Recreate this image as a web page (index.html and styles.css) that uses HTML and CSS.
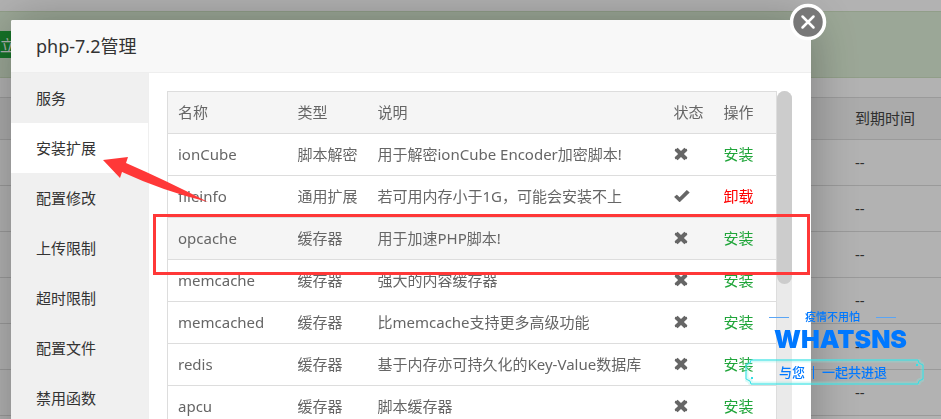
FILE: index.html
```html
<!DOCTYPE html>
<html lang="zh-CN">
<head>
    <meta charset="UTF-8">
    <meta name="viewport" content="width=device-width, initial-scale=1.0">
    <title>php-7.2管理</title>
    <link rel="stylesheet" href="styles.css">
</head>
<body>
    <svg class="symbols" aria-hidden="true">
        <symbol id="icon-remove" viewBox="0 0 14 14">
            <path d="M3.6 .8 7 4.1 10.4 .8 11.8 2.1 12.8 1.7 13.3 3.8 9.9 7 13.3 10.2 12.8 12.3 11.8 11.9 10.4 13.2 7 9.9 3.6 13.2 2.2 11.9 1.2 12.3 .7 10.2 4.1 7 .7 3.8 1.2 1.7 2.2 2.1z"/>
        </symbol>
        <symbol id="icon-ok" viewBox="0 0 16 14">
            <path d="M13.1 1.2 15.7 3.6 6.2 12.8Q5.6 13.2 5 12.7L.4 8.2Q.2 7.8.5 7.5L2.4 5.9Q2.8 5.7 3.2 6L5.6 8.2 12.5 1.3Q12.8 1 13.1 1.2z"/>
        </symbol>
    </svg>

    <!-- Site list -->
    <main class="page">
        <div class="notice"><button class="notice-btn">立</button></div>
        <table class="sites">
            <thead>
                <tr><th></th><th class="expire">到期时间</th></tr>
            </thead>
            <tbody>
                <tr><td></td><td>--</td></tr>
                <tr><td></td><td>--</td></tr>
                <tr><td></td><td>--</td></tr>
                <tr><td></td><td>--</td></tr>
                <tr><td></td><td>--</td></tr>
                <tr><td></td><td>--</td></tr>
            </tbody>
        </table>
    </main>

    <div class="shade"></div>

    <!-- PHP dialog -->
    <div class="dialog" role="dialog" aria-labelledby="dialog-title">
        <h1 class="dialog-title" id="dialog-title">php-7.2管理</h1>
        <button class="dialog-close" aria-label="关闭">
            <svg viewBox="0 0 38 38">
                <circle cx="19" cy="19" r="16.5" fill="#787878" stroke="#fff" stroke-width="3.5"/>
                <path d="M13.5 13.5 24.5 24.5M24.5 13.5 13.5 24.5" stroke="#fff" stroke-width="2.5" stroke-linecap="round"/>
            </svg>
        </button>
        <div class="dialog-body">
            <nav class="menu">
                <a href="#">服务</a>
                <a href="#" class="active">安装扩展</a>
                <a href="#">配置修改</a>
                <a href="#">上传限制</a>
                <a href="#">超时限制</a>
                <a href="#">配置文件</a>
                <a href="#">禁用函数</a>
            </nav>
            <div class="content">
                <table class="extensions">
                    <thead>
                        <tr>
                            <th class="col-name">名称</th>
                            <th class="col-type">类型</th>
                            <th>说明</th>
                            <th class="col-state">状态</th>
                            <th class="col-action">操作</th>
                        </tr>
                    </thead>
                    <tbody>
                        <tr>
                            <td>ionCube</td><td>脚本解密</td><td>用于解密ionCube Encoder加密脚本!</td>
                            <td><svg class="state"><use href="#icon-remove"/></svg></td>
                            <td><a href="#" class="install">安装</a></td>
                        </tr>
                        <tr>
                            <td>fileinfo</td><td>通用扩展</td><td>若可用内存小于1G，可能会安装不上</td>
                            <td><svg class="state state-ok"><use href="#icon-ok"/></svg></td>
                            <td><a href="#" class="uninstall">卸载</a></td>
                        </tr>
                        <tr class="current">
                            <td>opcache</td><td>缓存器</td><td>用于加速PHP脚本!</td>
                            <td><svg class="state"><use href="#icon-remove"/></svg></td>
                            <td><a href="#" class="install">安装</a></td>
                        </tr>
                        <tr>
                            <td>memcache</td><td>缓存器</td><td>强大的内容缓存器</td>
                            <td><svg class="state"><use href="#icon-remove"/></svg></td>
                            <td><a href="#" class="install">安装</a></td>
                        </tr>
                        <tr>
                            <td>memcached</td><td>缓存器</td><td>比memcache支持更多高级功能</td>
                            <td><svg class="state"><use href="#icon-remove"/></svg></td>
                            <td><a href="#" class="install">安装</a></td>
                        </tr>
                        <tr>
                            <td>redis</td><td>缓存器</td><td>基于内存亦可持久化的Key-Value数据库</td>
                            <td><svg class="state"><use href="#icon-remove"/></svg></td>
                            <td><a href="#" class="install">安装</a></td>
                        </tr>
                        <tr>
                            <td>apcu</td><td>缓存器</td><td>脚本缓存器</td>
                            <td><svg class="state"><use href="#icon-remove"/></svg></td>
                            <td><a href="#" class="install">安装</a></td>
                        </tr>
                    </tbody>
                </table>
                <div class="scrollbar"><div class="scrollbar-thumb"></div></div>
            </div>
        </div>

        <!-- Marks for the opcache step -->
        <div class="mark-box"></div>
        <svg class="mark-arrow" viewBox="0 0 106 48">
            <path d="M0 3 25 0 23 6 Q62 23 105 45 Q60 34 19 15 L17 21z" fill="#ff3838"/>
        </svg>
    </div>

    <!-- Watermark -->
    <div class="watermark">
        <div class="watermark-top"><span>疫情不用怕</span></div>
        <div class="watermark-name">WHATSNS</div>
        <div class="watermark-slogan">
            <svg class="watermark-frame" viewBox="0 0 179 26">
                <path d="M6 1H173L174 4 178 6V20L174 22 173 25H6L5 22 1 20V6L5 4z" fill="none" stroke="#7ff0e4" stroke-width="5" opacity=".3"/>
                <path d="M6 1H173L174 4 178 6V20L174 22 173 25H6L5 22 1 20V6L5 4z" fill="none" stroke="#33e0e6"/>
                <path d="M171 6h2M6 19h2" stroke="#33e0e6" stroke-width="2"/>
            </svg>
            <span>与您</span><span class="divider"></span><span>一起共进退</span>
        </div>
    </div>
</body>
</html>
```
FILE: styles.css
```css
* {
    box-sizing: border-box;
}

body {
    margin: 0;
    height: 100vh;
    overflow: hidden;
    background-color: #fff;
    color: #666;
    font-family: "Noto Sans", "Noto Sans CJK SC", sans-serif;
    font-size: 15px;
    line-height: 20px;
}

a {
    text-decoration: none;
}

table {
    width: 100%;
    border-collapse: collapse;
    table-layout: fixed;
}

th {
    font-weight: 400;
    text-align: left;
}

.symbols {
    display: none;
}

/* Site list */
.page {
    height: 100vh;
    padding-top: 11px;
    overflow: hidden;
}

.notice {
    height: 67px;
    margin-bottom: 19px;
    padding-top: 19px;
    background-color: #dff0d8;
    border-top: 1px solid #d0e3c4;
    border-bottom: 1px solid #d0e3c4;
}

.notice-btn {
    display: block;
    width: 60px;
    height: 27px;
    padding: 0;
    border: none;
    background-color: #20a53a;
    color: #fff;
    font: inherit;
    text-align: left;
}

.sites {
    border-bottom: 1px solid #ddd;
}

.sites th,
.sites td {
    height: 46px;
    padding: 0 0 2px;
    border-top: 1px solid #ddd;
    color: #444;
}

.sites th {
    height: 42px;
    background-color: #f5f5f5;
}

.sites .expire {
    width: 86px;
}

.shade {
    position: fixed;
    inset: 0;
    background-color: rgba(0, 0, 0, 0.3);
}

/* Dialog */
.dialog {
    position: fixed;
    top: 20px;
    right: 130px;
    bottom: -120px;
    left: 11px;
    background-color: #fff;
    border-radius: 2px;
    box-shadow: 1px 1px 50px rgba(0, 0, 0, 0.3);
}

.dialog-title {
    margin: 0;
    padding: 0 25px;
    background-color: #f8f8f8;
    border-bottom: 1px solid #eee;
    border-radius: 2px 2px 0 0;
    color: #333;
    font-size: 18px;
    font-weight: 400;
    line-height: 52px;
}

.dialog-close {
    position: absolute;
    top: -17px;
    right: -16px;
    width: 38px;
    height: 38px;
    padding: 0;
    border: none;
    background: none;
    cursor: pointer;
}

.dialog-close svg {
    display: block;
}

.dialog-body {
    display: flex;
    height: 100%;
}

.menu {
    width: 138px;
    background-color: #f0f0f0;
    border-right: 1px solid #efefef;
}

.menu a {
    display: block;
    padding-left: 25px;
    color: #333;
    line-height: 50px;
}

.menu .active {
    background-color: #fff;
}

.content {
    display: flex;
    flex: 1;
    align-items: flex-start;
    padding: 18px 19px 0 18px;
}

.extensions {
    flex: 1;
    border: 1px solid #ddd;
}

.extensions th,
.extensions td {
    height: 42px;
    padding: 0 10px 2px;
    border-bottom: 1px solid #ddd;
    white-space: nowrap;
}

.extensions th,
.extensions .current {
    background-color: #f5f5f5;
}

.extensions .col-name {
    width: 120px;
}

.extensions .col-type {
    width: 80px;
}

.extensions .col-state {
    width: 50px;
}

.extensions .col-action {
    width: 63px;
}

.extensions .col-state,
.extensions td:nth-child(4) {
    padding-right: 0;
}

.state {
    display: block;
    width: 14px;
    height: 14px;
    fill: #666;
}

.state-ok {
    width: 16px;
}

.install {
    color: #20a53a;
}

.uninstall {
    color: #f00;
}

.scrollbar {
    width: 15px;
    height: 420px;
    background-color: #eaeaea;
    border-radius: 8px;
}

.scrollbar-thumb {
    height: 193px;
    background-color: #ccc;
    border-radius: 8px;
}

/* Marks */
.mark-box {
    position: absolute;
    top: 194px;
    right: 1px;
    left: 142px;
    height: 61px;
    border: 3px solid #ff3838;
}

.mark-arrow {
    position: absolute;
    top: 137px;
    left: 92px;
    width: 106px;
    height: 48px;
}

/* Watermark */
.watermark {
    position: fixed;
    right: 17px;
    bottom: 34px;
    width: 179px;
    color: #0078ff;
    font-weight: 500;
}

.watermark-top {
    display: flex;
    align-items: center;
    justify-content: center;
    gap: 16px;
    padding-right: 4px;
    font-size: 11px;
    line-height: 12px;
}

.watermark-top::before,
.watermark-top::after {
    content: "";
    width: 20px;
    height: 1px;
    background-color: #5aa5f5;
}

.watermark-name {
    padding-left: 12px;
    font-family: Inter, "Open Sans", sans-serif;
    font-size: 25px;
    font-weight: 900;
    line-height: 32px;
    text-align: center;
}

.watermark-slogan {
    position: relative;
    display: flex;
    align-items: center;
    gap: 8px;
    height: 26px;
    margin-top: 4px;
    padding-left: 34px;
    font-size: 13px;
}

.watermark-frame {
    position: absolute;
    inset: 0;
}

.divider {
    width: 1px;
    height: 13px;
    background-color: #0078ff;
}
```
